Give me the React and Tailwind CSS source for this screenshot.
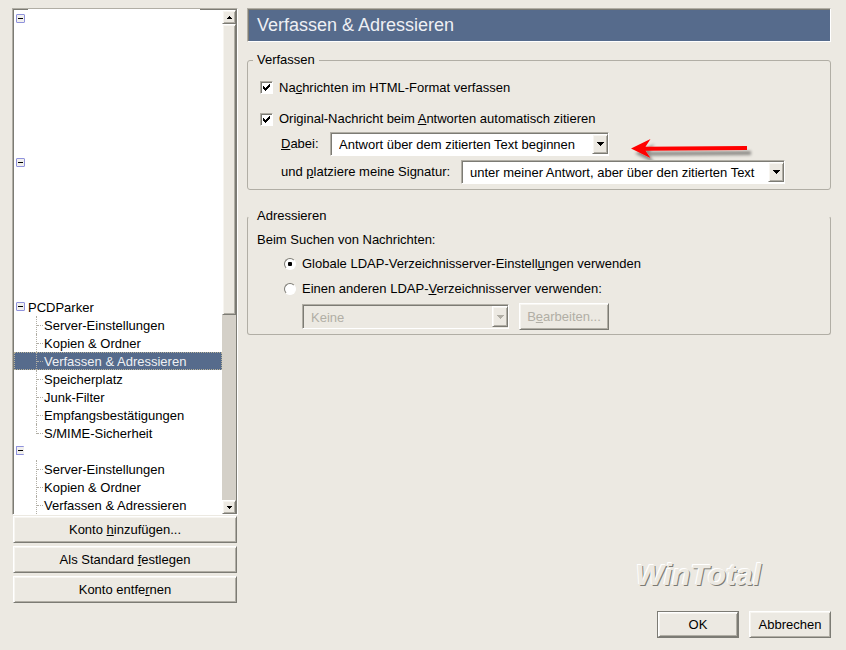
import React from "react";

const accountPages = [
  "Server-Einstellungen",
  "Kopien & Ordner",
  "Verfassen & Adressieren",
  "Speicherplatz",
  "Junk-Filter",
  "Empfangsbestätigungen",
  "S/MIME-Sicherheit",
];

const accounts = [
  { name: "", pages: [] },
  { name: "", pages: [] },
  { name: "PCDParker", pages: accountPages, selected: 2 },
  { name: "", pages: accountPages.slice(0, 3), cut: true },
];

const raised =
  "border border-t-white border-l-white border-r-[#7c7b74] border-b-[#7c7b74] shadow-[inset_1px_1px_0_#f7f5f0,inset_-1px_-1px_0_#b1aea5]";
const sunken =
  "border border-t-[#b1aea5] border-l-[#b1aea5] border-r-white border-b-white shadow-[inset_1px_1px_0_#7c7b74]";

const Triangle = ({ className = "fill-black" }) => (
  <svg className={className} width="7" height="4" viewBox="0 0 7 4" shapeRendering="crispEdges" aria-hidden="true">
    <path d="M0 0h7v1H6v1H5v1H4v1H3V3H2V2H1V1H0z" />
  </svg>
);

const ScrollTriangle = ({ up = false }) => (
  <svg className="fill-black" width="5" height="3" viewBox="0 0 5 3" shapeRendering="crispEdges" aria-hidden="true">
    <path d={up ? "M2 0h1v1h1v1h1v1H0V2h1V1h1z" : "M0 0h5v1H4v1H3v1H2V2H1V1H0z"} />
  </svg>
);

const Button = ({ children, height = "h-[27px]", className = "", ...props }) => (
  <button type="button" className={`flex items-center justify-center ${height} ${raised} ${className}`} {...props}>
    <span>{children}</span>
  </button>
);

const Select = ({ id, value, className, disabled = false }) => (
  <div className={`relative ${className}`}>
    <select
      id={id}
      disabled={disabled}
      className={`block h-full w-full appearance-none pt-0.5 pr-5 pl-2 opacity-100 outline-none ${sunken} ${
        disabled ? "bg-[#ece9e2] text-[#b1aea5]" : "bg-white text-black"
      }`}
    >
      <option>{value}</option>
    </select>
    <span
      className={`pointer-events-none absolute inset-y-0.5 right-px flex w-4 items-center justify-center bg-[#ece9e2] ${raised}`}
    >
      <Triangle className={disabled ? "fill-[#b1aea5]" : "fill-black"} />
    </span>
  </div>
);

const Checkbox = ({ id, children, className }) => (
  <div className={`flex items-center gap-[6px] pl-[7px] ${className}`}>
    <span className="grid place-items-center">
      <input
        id={id}
        type="checkbox"
        defaultChecked
        className={`peer col-start-1 row-start-1 size-[13px] appearance-none bg-white ${sunken}`}
      />
      <svg
        className="pointer-events-none invisible col-start-1 row-start-1 fill-black peer-checked:visible"
        width="7"
        height="7"
        viewBox="0 0 7 7"
        shapeRendering="crispEdges"
        aria-hidden="true"
      >
        <path d="M0 2h1v1h1v1h1V3h1V2h1V1h1V0h1v3H6v1H5v1H4v1H3v1H2V6H1V5H0z" />
      </svg>
    </span>
    <label htmlFor={id}>{children}</label>
  </div>
);

const Radio = ({ id, children, ...props }) => (
  <div className="flex h-[18px] items-center gap-[6px] pl-[31px]">
    <span className="grid place-items-center">
      <input
        id={id}
        type="radio"
        name="ldap"
        className="peer col-start-1 row-start-1 size-3 appearance-none rounded-full border border-t-[#7c7b74] border-l-[#7c7b74] border-r-white border-b-white bg-white"
        {...props}
      />
      <span className="pointer-events-none invisible col-start-1 row-start-1 size-1 rounded-[1px] bg-black peer-checked:visible" />
    </span>
    <label htmlFor={id}>{children}</label>
  </div>
);

const Toggle = ({ cut }) => (
  <button
    type="button"
    aria-label="Zuklappen"
    className={`mt-1 flex h-[9px] items-center justify-center rounded-[1px] border border-[#8f92dc] bg-[#f1f0ee] ${
      cut ? "w-2 border-r-0" : "w-[9px]"
    }`}
  >
    <span className="h-px w-[5px] bg-black" />
  </button>
);

const Account = ({ name, pages, selected, cut }) => (
  <li className={pages.length ? "" : "h-36"}>
    <div className="flex h-[18px] items-start gap-[3px] pl-0.5">
      <Toggle cut={cut} />
      <span className="leading-5">{name}</span>
    </div>
    <ul>
      {pages.map((page, i) => (
        <li
          key={page}
          className={`flex h-[18px] pl-[22px] ${
            i === selected
              ? "bg-[#566b8c] text-[#eef0f4] outline-1 -outline-offset-1 outline-dotted outline-[#b9b39a]"
              : ""
          }`}
        >
          <span
            className={`flex w-[7px] border-l border-dotted border-[#b1aea5] ${
              i === 6 ? "h-[10px] items-end" : "items-center"
            }`}
          >
            <span className="w-full border-t border-dotted border-[#b1aea5]" />
          </span>
          <span className="pl-px leading-5">{page}</span>
        </li>
      ))}
    </ul>
  </li>
);

const Scrollbar = () => (
  <div className="flex w-[14px] flex-col bg-[#d4d0c8]">
    <button type="button" aria-label="Nach oben" className={`flex h-[14px] items-center justify-center bg-[#ece9e2] ${raised}`}>
      <ScrollTriangle up />
    </button>
    <div className={`h-[291px] bg-[#ece9e2] ${raised}`} />
    <button
      type="button"
      aria-label="Nach unten"
      className={`mt-auto flex h-[14px] items-center justify-center bg-[#ece9e2] ${raised}`}
    >
      <ScrollTriangle />
    </button>
  </div>
);

const Arrow = () => (
  <svg className="ml-[22px] overflow-visible" width="120" height="24" viewBox="0 0 120 24" aria-hidden="true">
    <defs>
      <filter id="arrow-shadow" x="-10%" y="-30%" width="130%" height="190%">
        <feDropShadow dx="4" dy="5" stdDeviation="1.5" floodColor="#000" floodOpacity="0.4" />
      </filter>
    </defs>
    <path d="M0 16.500L19.500 7l-5 7.700L116 14v4l-101.500.700 5 7.300z" fill="#f00" filter="url(#arrow-shadow)" />
  </svg>
);

export default function App() {
  return (
    <div className="flex min-h-screen bg-[#ece9e2] pt-2 pr-[15px] pb-3 pl-3 font-['Liberation_Sans',sans-serif] text-[13px] leading-[18px] text-black">
      <aside className="w-[226px] shrink-0">
        <div className="relative flex border border-t-[#b1aea5] border-l-[#b1aea5] border-r-white border-b-white">
          <div className="flex flex-1 border-t border-r border-l border-[#7c7b74] bg-white">
            <ul className="flex-1">
              {accounts.map((account, i) => (
                <Account key={i} {...account} />
              ))}
            </ul>
            <Scrollbar />
          </div>
          <span className="absolute top-0 left-[15px] h-px w-[172px] bg-white" />
        </div>
        <div className="mt-px mr-px ml-px flex flex-col gap-[3px]">
          <Button>
            Konto <u>h</u>inzufügen...
          </Button>
          <Button>
            Als Standard <u>f</u>estlegen
          </Button>
          <Button>
            Konto entfe<u>r</u>nen
          </Button>
        </div>
      </aside>

      <main className="ml-[9px] flex flex-1 flex-col">
        <div className={`bg-[#566b8c] ${sunken}`}>
          <h1 className="pl-[9px] text-[18px] leading-8 text-[#eef0f4]">Verfassen &amp; Adressieren</h1>
        </div>

        <fieldset className="mt-[9px] rounded-[3px] border border-[#b1aea5] pb-[5px] pl-[5px]">
          <legend className="px-1">Verfassen</legend>
          <Checkbox id="html" className="h-[37px]">
            Na<u>c</u>hrichten im HTML-Format verfassen
          </Checkbox>
          <Checkbox id="quote" className="h-[26px]">
            Original-Nachricht beim <u>A</u>ntworten automatisch zitieren
          </Checkbox>
          <div className="flex flex-col gap-1 pl-7">
            <div className="flex items-center">
              <label htmlFor="reply" className="w-[49px]">
                <u>D</u>abei:
              </label>
              <Select id="reply" value="Antwort über dem zitierten Text beginnen" className="h-6 w-[279px]" />
              <Arrow />
            </div>
            <div className="flex items-center">
              <label htmlFor="signature" className="w-[180px]">
                und <u>p</u>latziere meine Signatur:
              </label>
              <Select
                id="signature"
                value="unter meiner Antwort, aber über den zitierten Text"
                className="h-6 w-[324px]"
              />
            </div>
          </div>
        </fieldset>

        <fieldset className="mt-[17px] rounded-[3px] border border-[#b1aea5] border-t-transparent pb-1 pl-[5px]">
          <legend className="px-1">Adressieren</legend>
          <p className="pl-1 leading-[30px]">Beim Suchen von Nachrichten:</p>
          <Radio id="global" defaultChecked>
            Globale LDAP-Verzeichnisserver-Einstell<u>u</u>ngen verwenden
          </Radio>
          <div className="mt-[7px]">
            <Radio id="other">
              Einen anderen LDAP-<u>V</u>erzeichnisserver verwenden:
            </Radio>
          </div>
          <div className="mt-[5px] flex items-center gap-[10px] pl-[49px]">
            <Select id="ldap-server" value="Keine" disabled className="h-[25px] w-[207px]" />
            <Button disabled className="w-[90px] text-[#b1aea5]">
              B<u>e</u>arbeiten...
            </Button>
          </div>
        </fieldset>

        <footer className="mt-auto flex flex-col items-end">
          <p className="mr-[70px] text-[30px] leading-8 font-bold text-[#ece9e2] italic [text-shadow:-1px_-1px_0_#fff,1px_1px_0_#7c7b74]">
            WinTotal
          </p>
          <div className="mt-5 flex gap-[10px]">
            <div className="flex border border-[#7c7b74]">
              <Button height="h-[25px]" className="w-20">
                OK
              </Button>
            </div>
            <Button className="w-[82px]">Abbrechen</Button>
          </div>
        </footer>
      </main>
    </div>
  );
}
